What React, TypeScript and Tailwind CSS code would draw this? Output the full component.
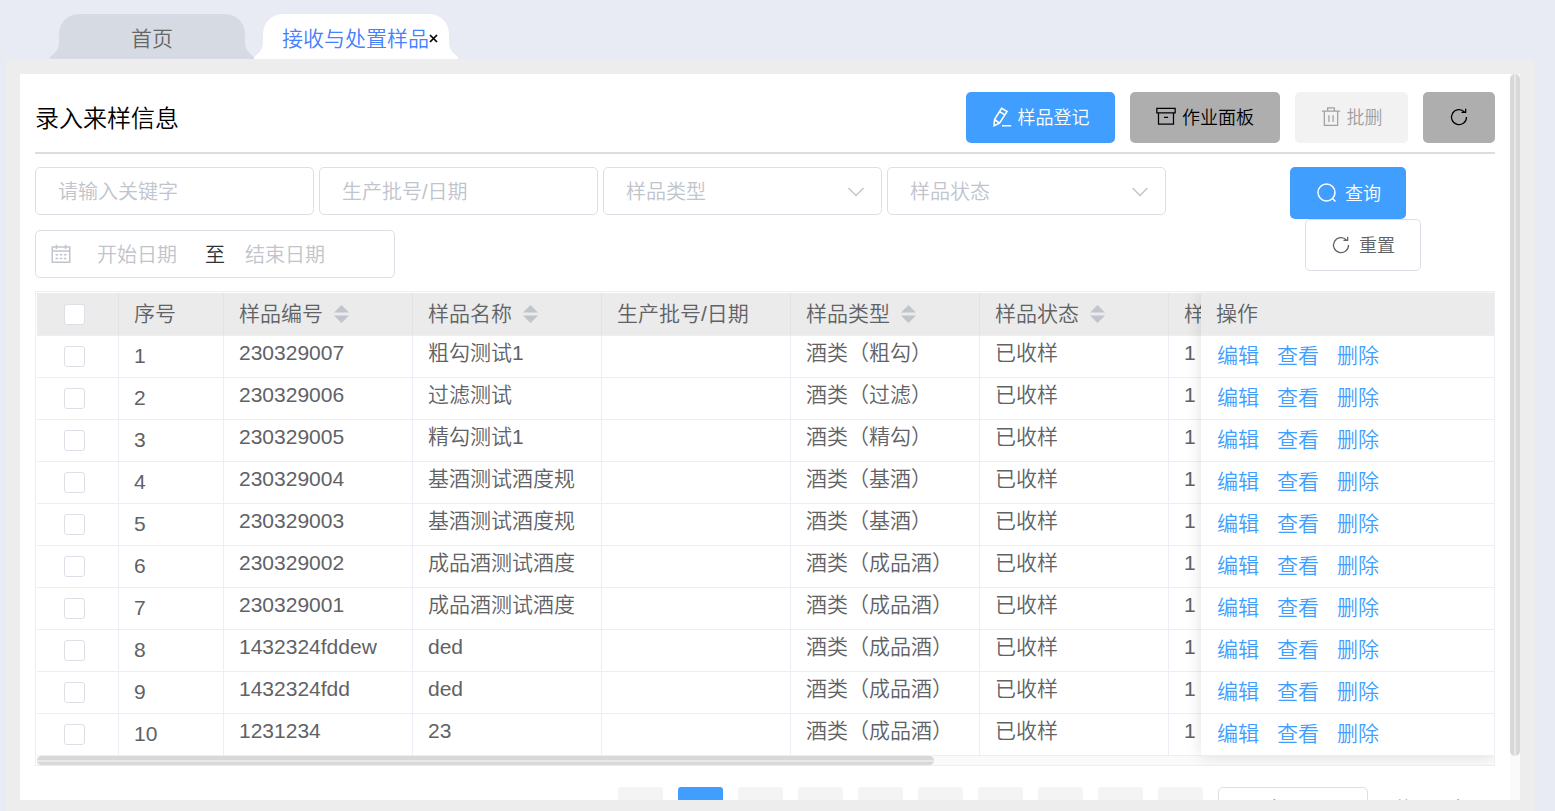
import { useState } from "react";
import type { ReactNode } from "react";

type Sample = {
  code: string;
  name: string;
  type: string;
};

const samples: Sample[] = [
  { code: "230329007", name: "粗勾测试1", type: "酒类（粗勾）" },
  { code: "230329006", name: "过滤测试", type: "酒类（过滤）" },
  { code: "230329005", name: "精勾测试1", type: "酒类（精勾）" },
  { code: "230329004", name: "基酒测试酒度规", type: "酒类（基酒）" },
  { code: "230329003", name: "基酒测试酒度规", type: "酒类（基酒）" },
  { code: "230329002", name: "成品酒测试酒度", type: "酒类（成品酒）" },
  { code: "230329001", name: "成品酒测试酒度", type: "酒类（成品酒）" },
  { code: "1432324fddew", name: "ded", type: "酒类（成品酒）" },
  { code: "1432324fdd", name: "ded", type: "酒类（成品酒）" },
  { code: "1231234", name: "23", type: "酒类（成品酒）" },
];

const columns = [
  { title: "样品编号", sortable: true },
  { title: "样品名称", sortable: true },
  { title: "生产批号/日期", sortable: false },
  { title: "样品类型", sortable: true },
  { title: "样品状态", sortable: true },
  { title: "样品数量", sortable: false },
];

const pages = ["‹", "1", "2", "3", "4", "5", "6", "…", "12", "›"];

const Icon = ({ className, children }: { className: string; children: ReactNode }) => (
  <svg
    viewBox="0 0 24 24"
    fill="none"
    stroke="currentColor"
    strokeWidth="1.5"
    className={`shrink-0 ${className}`}
    aria-hidden="true"
  >
    {children}
  </svg>
);

const EditIcon = () => (
  <Icon className="size-5">
    <g strokeWidth="1.9">
      <path d="M11.500 1.500l6.500 3.800-9 14.200-6.500 3 .500-7.500z" />
      <path d="M9 5.500l6.500 4M3 15l6 4.500M12 22.500h11" />
    </g>
  </Icon>
);

const BoxIcon = () => (
  <Icon className="size-5">
    <path d="M1 1.500h22v5.500H1zM3 7v13.500h18V7M9.500 12.500h5" />
  </Icon>
);

const TrashIcon = () => (
  <Icon className="size-5">
    <path d="M1 5h22M8 5V1h8v4M4 5v17h16V5M9.500 10v8M14.500 10v8" />
  </Icon>
);

const RefreshIcon = () => (
  <Icon className="size-5">
    <path d="M18.500 6A9 9 0 1 0 21 12M20 2v4.500H15" />
  </Icon>
);

const SearchIcon = () => (
  <Icon className="size-6">
    <circle cx="11.500" cy="11.500" r="8.500" />
    <path d="M17.500 17.500l3 3" />
  </Icon>
);

const CalendarIcon = () => (
  <Icon className="size-5">
    <g strokeWidth="1.8">
      <path d="M1.500 3.500h21v18.500h-21zM1.500 8.500h21M6.500 1v5M17.500 1v5" />
      <path d="M5.500 13h3M10.500 13h3M15.500 13h3M5.500 17.500h3M10.500 17.500h3M15.500 17.500h3" />
    </g>
  </Icon>
);

const SortIcon = () => (
  <svg viewBox="0 0 15 18" className="h-[18px] w-[15px] fill-[#c0c4cc]" aria-hidden="true">
    <path d="M0 7.500L7.500 0 15 7.500zM0 10.500h15L7.500 18z" />
  </svg>
);

const Tab = ({ active, children }: { active?: boolean; children: ReactNode }) => (
  <div className={`flex h-[45px] items-end ${active ? "text-white" : "text-[#d6dbe3]"}`}>
    <svg viewBox="0 0 9 15" className="h-[15px] w-[9px] fill-current" aria-hidden="true">
      <path d="M9 0v15H0v-2Q8 8 9 0z" />
    </svg>
    <div
      className={`flex h-full w-[186px] items-center justify-center rounded-t-[20px] bg-current pt-1 ${active ? "pl-2" : ""}`}
    >
      {children}
    </div>
    <svg viewBox="0 0 9 15" className="h-[15px] w-[9px] fill-current" aria-hidden="true">
      <path d="M0 0v15h9v-2Q1 8 0 0z" />
    </svg>
  </div>
);

const FilterSelect = ({ label }: { label: string }) => (
  <div className="relative w-[279px]">
    <select
      aria-label={label}
      className="h-12 w-full appearance-none rounded-[5px] border border-[#dcdfe6] bg-white px-[22px] pt-[2px] text-[20px] text-[#c0c4cc]"
    >
      <option>{label}</option>
    </select>
    <svg
      viewBox="0 0 16 10"
      className="pointer-events-none absolute top-5 right-[18px] h-[10px] w-4 fill-none stroke-[#c0c4cc]"
      strokeWidth="1.5"
      aria-hidden="true"
    >
      <path d="M0.500 1L8 8.500 15.500 1" />
    </svg>
  </div>
);

const Checkbox = ({ label, checked, onChange }: { label: string; checked: boolean; onChange: () => void }) => (
  <input
    type="checkbox"
    aria-label={label}
    checked={checked}
    onChange={onChange}
    className="block size-[21px] appearance-none rounded-[3px] border border-[#dcdfe6] bg-white checked:border-[#409eff] checked:bg-[#409eff]"
  />
);

const App = () => {
  const [selected, setSelected] = useState<string[]>([]);

  const toggle = (code: string) => {
    setSelected(selected.includes(code) ? selected.filter((c) => c !== code) : [...selected, code]);
  };

  const toggleAll = () => {
    setSelected(selected.length === samples.length ? [] : samples.map((s) => s.code));
  };

  return (
    <div className="flex h-screen flex-col overflow-hidden bg-[#e8ebf4] pr-5 pl-[5px] font-['Liberation_Sans','Noto_Sans_CJK_SC',sans-serif] font-[350] text-[#606266]">
      <nav className="flex shrink-0 pt-[14px] pl-[45px]">
        <Tab>
          <a href="#home" className="text-[21px] text-[#666]">首页</a>
        </Tab>
        <Tab active>
          <a href="#samples" className="text-[21px] text-[#4680ff]">接收与处置样品</a>
          <button type="button" aria-label="关闭" className="text-black">
            <svg viewBox="0 0 9 9" className="size-[9px] stroke-current" strokeWidth="1.7" aria-hidden="true">
              <path d="M1 1l7 7M8 1L1 8" />
            </svg>
          </button>
        </Tab>
      </nav>

      <div className="flex min-h-0 flex-1 rounded-t-[5px] bg-[#ededed] px-[15px] pt-[15px] pb-[11px]">
        <main className="flex min-w-0 flex-1 overflow-hidden bg-white">
          <div className="min-w-0 flex-1 px-[15px]">
            <header className="flex h-20 items-center justify-between border-b-2 border-[#dadde2] pt-2">
              <h1 className="pt-1 text-[24px] text-black">录入来样信息</h1>
              <div className="flex gap-[15px] text-[18px]">
                <button type="button" className="flex h-[51px] w-[149px] items-center justify-center gap-[6px] rounded-[5px] bg-[#409eff] text-white">
                  <EditIcon />
                  <span className="pt-[3px]">样品登记</span>
                </button>
                <button type="button" className="flex h-[51px] w-[150px] items-center justify-center gap-[6px] rounded-[5px] bg-[#aeaeae] text-black">
                  <BoxIcon />
                  <span className="pt-[3px]">作业面板</span>
                </button>
                <button type="button" disabled className="flex h-[51px] w-[113px] items-center justify-center gap-[6px] rounded-[5px] bg-[#f2f2f2] text-[#a0a0a0]">
                  <TrashIcon />
                  <span className="pt-[3px]">批删</span>
                </button>
                <button type="button" aria-label="刷新" className="flex h-[51px] w-[72px] items-center justify-center rounded-[5px] bg-[#aeaeae] text-black">
                  <RefreshIcon />
                </button>
              </div>
            </header>

            <form className="flex justify-between pt-[13px]">
              <div className="flex flex-1 flex-wrap gap-x-[5px] gap-y-[15px]">
                <input
                  aria-label="请输入关键字"
                  placeholder="请输入关键字"
                  className="h-12 w-[279px] rounded-[5px] border border-[#dcdfe6] px-[22px] pt-[2px] text-[20px] placeholder:text-[#c0c4cc]"
                />
                <input
                  aria-label="生产批号/日期"
                  placeholder="生产批号/日期"
                  className="h-12 w-[279px] rounded-[5px] border border-[#dcdfe6] px-[22px] pt-[2px] text-[20px] placeholder:text-[#c0c4cc]"
                />
                <FilterSelect label="样品类型" />
                <FilterSelect label="样品状态" />
                <div className="flex h-12 w-[360px] items-center rounded-[5px] border border-[#dcdfe6] px-[15px] text-[20px] text-[#c0c4cc]">
                  <CalendarIcon />
                  <input
                    aria-label="开始日期"
                    placeholder="开始日期"
                    className="w-[132px] pt-[2px] text-center placeholder:text-[#c0c4cc]"
                  />
                  <span className="w-6 pt-[2px] text-center text-[#303133]">至</span>
                  <input
                    aria-label="结束日期"
                    placeholder="结束日期"
                    className="w-[116px] pt-[2px] text-center placeholder:text-[#c0c4cc]"
                  />
                </div>
              </div>
              <div className="mr-[74px] flex flex-col items-end text-[18px]">
                <button type="button" className="mr-[15px] flex h-[52px] w-[116px] items-center justify-center gap-[6px] rounded-[5px] bg-[#409eff] text-white">
                  <SearchIcon />
                  <span className="pt-[3px]">查询</span>
                </button>
                <button type="reset" className="flex h-[52px] w-[116px] items-center justify-center gap-2 rounded-[5px] border border-[#dcdfe6] bg-white">
                  <RefreshIcon />
                  <span className="pt-[3px]">重置</span>
                </button>
              </div>
            </form>

            <section className="mt-[13px] overflow-hidden border border-[#ebeef5] pt-px pl-px text-[21px]">
              <div className="flex">
                <div className="min-w-0 flex-1 overflow-hidden">
                  <table className="w-[1321px] table-fixed border-separate border-spacing-0 text-left">
                    <colgroup>
                      <col className="w-[82px]" />
                      <col className="w-[105px]" />
                    </colgroup>
                    <thead>
                      <tr className="h-[43px] bg-[#ebebeb]">
                        <th className="border-r border-b border-[#e2e3e6] border-b-[#ebeef5] p-0 pl-[27px]">
                          <Checkbox label="全选" checked={selected.length === samples.length} onChange={toggleAll} />
                        </th>
                        <th className="border-r border-b border-[#e2e3e6] border-b-[#ebeef5] p-0 pl-[15px] font-[350]">序号</th>
                        {columns.map((column) => (
                          <th key={column.title} className="border-r border-b border-[#e2e3e6] border-b-[#ebeef5] p-0 pl-[15px] font-[350] whitespace-nowrap">
                            <div className="flex items-center gap-[11px]">
                              {column.title}
                              {column.sortable && <SortIcon />}
                            </div>
                          </th>
                        ))}
                      </tr>
                    </thead>
                    <tbody>
                      {samples.map((sample, index) => (
                        <tr key={sample.code} className="h-[42px] leading-[31px] whitespace-nowrap">
                          <td className="border-r border-b border-[#ebeef5] p-0 pl-[27px]">
                            <Checkbox label={sample.code} checked={selected.includes(sample.code)} onChange={() => toggle(sample.code)} />
                          </td>
                          <td className="border-r border-b border-[#ebeef5] p-0 pb-[2px] pl-[15px]">{index + 1}</td>
                          <td className="border-r border-b border-[#ebeef5] p-0 pb-2 pl-[15px]">{sample.code}</td>
                          <td className="border-r border-b border-[#ebeef5] p-0 pb-2 pl-[15px]">{sample.name}</td>
                          <td className="border-r border-b border-[#ebeef5] p-0"></td>
                          <td className="border-r border-b border-[#ebeef5] p-0 pb-2 pl-[15px]">{sample.type}</td>
                          <td className="border-r border-b border-[#ebeef5] p-0 pb-2 pl-[15px]">已收样</td>
                          <td className="border-r border-b border-[#ebeef5] p-0 pb-2 pl-[15px]">1</td>
                        </tr>
                      ))}
                    </tbody>
                  </table>
                </div>
                <div className="relative w-[293px] shrink-0 bg-white shadow-[0_0_15px_rgba(0,0,0,0.12)]">
                  <table className="w-full border-separate border-spacing-0 text-left">
                    <thead>
                      <tr className="h-[43px] bg-[#ebebeb]">
                        <th className="border-b border-[#ebeef5] p-0 pl-[15px] font-[350]">操作</th>
                      </tr>
                    </thead>
                    <tbody>
                      {samples.map((sample) => (
                        <tr key={sample.code} className="h-[42px] leading-[31px]">
                          <td className="border-b border-[#ebeef5] p-0 pb-[2px] pl-4">
                            <div className="flex gap-[18px] text-[#409eff]">
                              <a href="#edit">编辑</a>
                              <a href="#view">查看</a>
                              <a href="#delete">删除</a>
                            </div>
                          </td>
                        </tr>
                      ))}
                    </tbody>
                  </table>
                </div>
              </div>
              <div className="h-[9px] bg-[#fafafa]">
                <div className="flex h-[9px] w-[897px] flex-col justify-center rounded-[5px] bg-[#d8d8d8]">
                  <div className="h-[2px] bg-[#e8e8e8]"></div>
                </div>
              </div>
            </section>

            <div className="flex justify-end gap-[15px] pt-[21px] text-[20px]">
              {pages.map((page) => (
                <button
                  key={page}
                  type="button"
                  className={`h-[45px] w-[45px] shrink-0 rounded-[3px] ${page === "1" ? "bg-[#409eff] text-white" : "bg-[#f4f4f5]"}`}
                >
                  {page}
                </button>
              ))}
              <select aria-label="每页条数" className="h-[45px] w-[150px] shrink-0 appearance-none rounded-[5px] border border-[#dcdfe6] px-7 text-[18px]">
                <option>10条/页</option>
              </select>
              <span className="w-[112px] shrink-0 pl-[11px] text-[18px] leading-[45px]">共 112 条</span>
            </div>
          </div>
          <div className="w-[10px] shrink-0 bg-[#fafafa]">
            <div className="flex h-[682px] justify-center rounded-[5px] bg-[#d8d8d8]">
              <div className="w-[2px] bg-[#e8e8e8]"></div>
            </div>
          </div>
        </main>
      </div>
    </div>
  );
};

export default App;
